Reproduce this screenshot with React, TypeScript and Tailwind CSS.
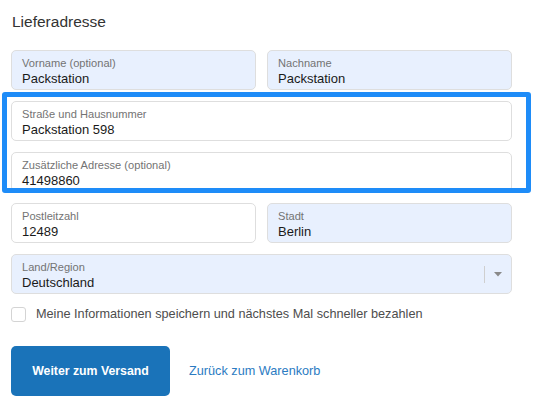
import React from 'react';

type FieldProps = {
  label: string;
  value: string;
  filled?: boolean;
  select?: boolean;
};

function Field({ label, value, filled, select }: FieldProps) {
  return (
    <div
      className={`relative h-[40px] rounded-[5px] border border-[#dedede] pl-[10px] pt-[5px] ${
        filled ? 'bg-[#e8f0fe]' : 'bg-white'
      }`}
    >
      <div className="text-[11.1px] leading-[14px] text-[#737373]">{label}</div>
      <div className="text-[13px] leading-[17px] text-[#1a1a1a]">{value}</div>
      {select && (
        <div className="absolute right-0 top-0 flex h-full items-center">
          <span className="h-[17px] w-px bg-[#cfcfcf]" />
          <svg width="26" height="10" viewBox="0 0 26 10" className="text-[#8a8a8a]">
            <path d="M9 3h8l-4 4.5z" fill="currentColor" />
          </svg>
        </div>
      )}
    </div>
  );
}

export default function App() {
  return (
    <div
      className="relative h-[415px] w-[550px] bg-white text-[#1a1a1a]"
      style={{ fontFamily: '"Liberation Sans", Arial, sans-serif' }}
    >
      <div className="w-[512px] pl-[11px] pt-[12px]">
        <h2 className="pl-[1px] text-[15.5px] leading-[19px] text-[#333]">Lieferadresse</h2>

        <div className="mt-[19px] flex flex-col gap-[11px]">
          <div className="grid grid-cols-2 gap-[11px]">
            <Field label="Vorname (optional)" value="Packstation" filled />
            <Field label="Nachname" value="Packstation" filled />
          </div>
          <Field label="Straße und Hausnummer" value="Packstation 598" />
          <Field label="Zusätzliche Adresse (optional)" value="41498860" />
          <div className="grid grid-cols-2 gap-[11px]">
            <Field label="Postleitzahl" value="12489" />
            <Field label="Stadt" value="Berlin" filled />
          </div>
          <Field label="Land/Region" value="Deutschland" filled select />
        </div>

        <label className="mt-[11px] flex items-center gap-[10px]">
          <span className="h-[15px] w-[15px] rounded-[3px] border border-[#d4d4d4] bg-white" />
          <span className="text-[12.7px] text-[#4d4d4d]">
            Meine Informationen speichern und nächstes Mal schneller bezahlen
          </span>
        </label>

        <div className="mt-[22px] flex items-center gap-[19px]">
          <button className="h-[50px] w-[159px] rounded-[5px] bg-[#1a73b9] text-[12.3px] font-bold text-white">
            Weiter zum Versand
          </button>
          <a className="text-[12.7px] text-[#2b7bc2]">Zurück zum Warenkorb</a>
        </div>
      </div>

      {/* highlight annotation */}
      <div className="pointer-events-none absolute left-[2px] top-[92px] h-[101px] w-[529px] rounded-[3px] border-[5px] border-[#1e8cf8]" />
    </div>
  );
}
